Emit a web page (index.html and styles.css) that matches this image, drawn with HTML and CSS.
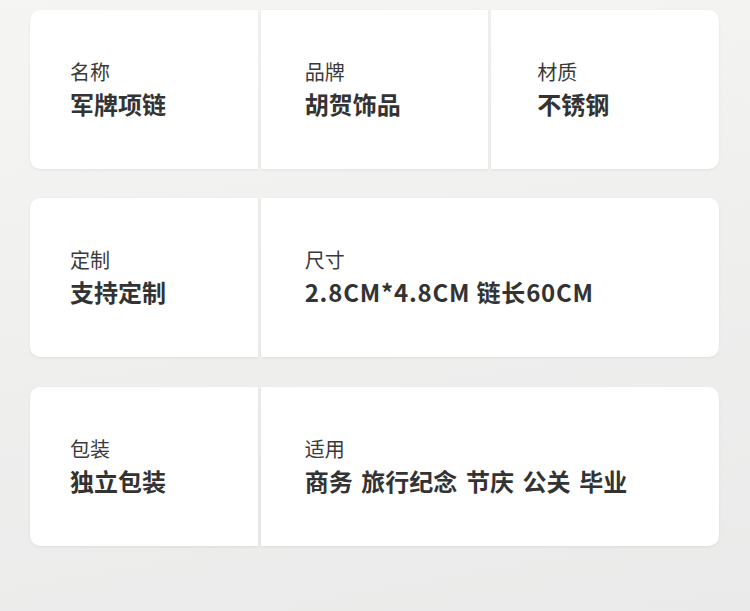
FILE: index.html
```html
<!DOCTYPE html>
<html lang="zh-CN">
<head>
<meta charset="utf-8">
<title>商品参数</title>
<link rel="stylesheet" href="styles.css">
</head>
<body>
<main class="specs">
  <section class="row">
    <div class="cell cell--first">
      <div class="label">名称</div>
      <div class="value">军牌项链</div>
    </div>
    <div class="cell cell--mid">
      <div class="label">品牌</div>
      <div class="value">胡贺饰品</div>
    </div>
    <div class="cell cell--last">
      <div class="label">材质</div>
      <div class="value">不锈钢</div>
    </div>
  </section>
  <section class="row">
    <div class="cell cell--first">
      <div class="label">定制</div>
      <div class="value">支持定制</div>
    </div>
    <div class="cell cell--mid cell--wide">
      <div class="label">尺寸</div>
      <div class="value value--latin">2.8CM*4.8CM 链长60CM</div>
    </div>
  </section>
  <section class="row row--last">
    <div class="cell cell--first">
      <div class="label">包装</div>
      <div class="value">独立包装</div>
    </div>
    <div class="cell cell--mid cell--wide">
      <div class="label">适用</div>
      <div class="value value--spaced">商务 旅行纪念 节庆 公关 毕业</div>
    </div>
  </section>
</main>
</body>
</html>
```

FILE: styles.css
```css
* { box-sizing: border-box; }

html, body {
  margin: 0;
  padding: 0;
}

body {
  width: 750px;
  height: 611px;
  overflow: hidden;
  background: linear-gradient(170deg, #f5f5f4 0%, #efefee 50%, #eaeaea 100%);
  font-family: "Noto Sans CJK SC", "Noto Sans", sans-serif;
  color: #333;
}

.specs {
  padding: 10px 31px 0 30px;
  display: flex;
  flex-direction: column;
  gap: 29px;
}

.row {
  display: grid;
  grid-template-columns: repeat(3, 1fr);
  column-gap: 3px;
  height: 159px;
}

.row--last {
  margin-top: 1px;
}

.cell {
  background: #fff;
  display: flex;
  flex-direction: column;
  justify-content: center;
  box-shadow: 0 1px 3px rgba(0, 0, 0, 0.07);
  padding-bottom: 2px;
}

.cell--first {
  border-radius: 10px 0 0 10px;
  padding-left: 40px;
}

.cell--mid {
  padding-left: 44px;
}

.cell--last {
  border-radius: 0 10px 10px 0;
  padding-left: 46px;
}

.cell--wide {
  grid-column: span 2;
  border-radius: 0 10px 10px 0;
}

.label {
  font-size: 20px;
  line-height: 24px;
  color: #3a3a3a;
  font-weight: 400;
}

.value {
  margin-top: 6px;
  font-size: 24px;
  line-height: 28px;
  font-weight: 700;
  color: #333;
  white-space: nowrap;
}

.value--latin {
  letter-spacing: 0.8px;
}

.value--spaced {
  word-spacing: 3.2px;
}
```
